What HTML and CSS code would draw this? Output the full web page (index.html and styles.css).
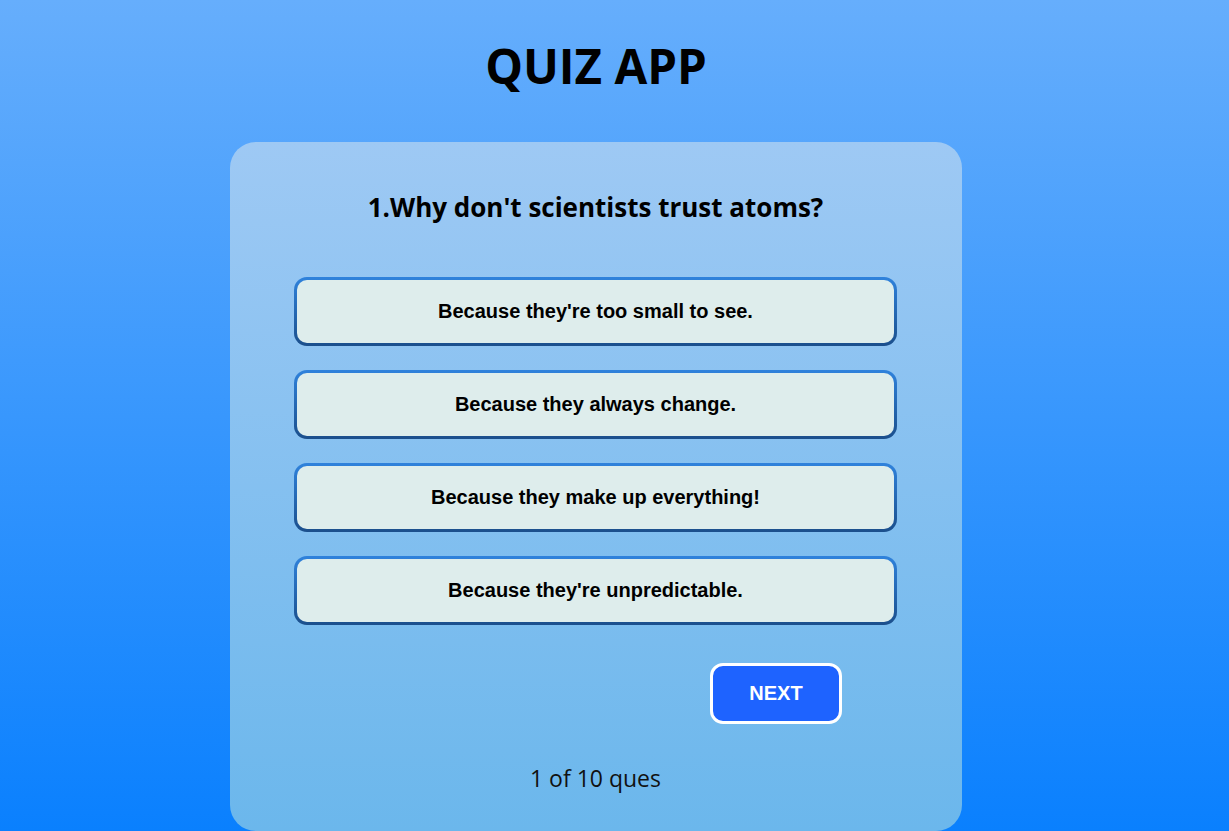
FILE: index.html
```html
<!DOCTYPE html>
<html>
<head>
<meta charset="utf-8">
<link rel="stylesheet" href="styles.css">
</head>
<body>
<div class="page">
  <h1 class="title">QUIZ APP</h1>
  <div class="card">
    <h2 class="question">1.Why don't scientists trust atoms?</h2>
    <div class="options">
      <button class="option">Because they're too small to see.</button>
      <button class="option">Because they always change.</button>
      <button class="option">Because they make up everything!</button>
      <button class="option">Because they're unpredictable.</button>
    </div>
    <div class="actions">
      <button class="next">NEXT</button>
    </div>
    <div class="counter">1 of 10 ques</div>
  </div>
</div>
</body>
</html>
```

FILE: styles.css
```css
html, body {
  margin: 0;
  padding: 0;
  height: 100%;
}
body {
  background: linear-gradient(180deg, #66aefc 0%, #0a80fe 100%);
  font-family: "Open Sans", "Noto Sans", sans-serif;
  overflow: hidden;
}
.page {
  width: 1192px;
  display: flex;
  flex-direction: column;
  align-items: center;
}
.title {
  margin: 35px 0 0;
  height: 65px;
  font-size: 47.5px;
  line-height: 62px;
  font-weight: 700;
  color: #000;
}
.card {
  margin-top: 42px;
  width: 732px;
  height: 689px;
  box-sizing: border-box;
  border-radius: 26px;
  background: linear-gradient(180deg, #9ec9f4 0%, #6bb7ec 100%);
  padding: 48px 65px 0 64px;
  display: flex;
  flex-direction: column;
}
.question {
  margin: 0;
  text-align: center;
  font-size: 26px;
  line-height: 34px;
  font-weight: 700;
  color: #000;
}
.options {
  margin-top: 53px;
  display: flex;
  flex-direction: column;
  gap: 24px;
}
.option {
  height: 69px;
  box-sizing: border-box;
  border: 3px solid transparent;
  border-radius: 13px;
  background: linear-gradient(#deedec, #deedec) padding-box,
              linear-gradient(180deg, #2f82dc 0%, #1b4f8c 100%) border-box;
  font-family: "Liberation Sans", Arial, sans-serif;
  font-size: 20px;
  font-weight: 700;
  color: #000;
  text-align: center;
  padding: 0;
}
.actions {
  margin-top: 38px;
  display: flex;
  justify-content: flex-end;
  padding-right: 55px;
}
.next {
  width: 132px;
  height: 61px;
  box-sizing: border-box;
  border: 3px solid #fff;
  border-radius: 13px;
  background: #1e63ff;
  color: #fff;
  font-family: "Liberation Sans", Arial, sans-serif;
  font-size: 20px;
  font-weight: 700;
  padding: 0;
}
.counter {
  margin-top: 39px;
  text-align: center;
  font-size: 23px;
  line-height: 30px;
  color: #111;
}
```
